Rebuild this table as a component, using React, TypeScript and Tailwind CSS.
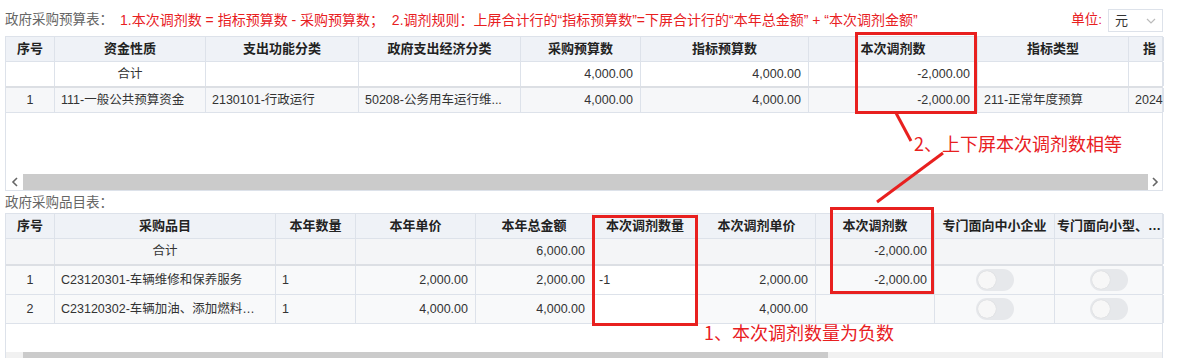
import React from 'react';

const border = 'border-[#dde2ea]';

type Cell = { text?: React.ReactNode; align?: 'l' | 'c' | 'r'; bg?: string };

function Row({ cols, cells, h, head, extra }: { cols: string; cells: Cell[]; h: string; head?: boolean; extra?: string }) {
  return (
    <div className={`grid ${cols} ${h} ${extra || ''}`}>
      {cells.map((c, i) => (
        <div
          key={i}
          className={`flex items-center overflow-hidden whitespace-nowrap border-r ${border} ${
            c.align === 'r' ? 'justify-end pr-[7px]' : c.align === 'l' ? 'justify-start pl-[6px]' : 'justify-center'
          } ${head ? 'font-bold text-[13px] text-[#222]' : 'text-[12.5px] text-[#333]'} ${c.bg || ''}`}
        >
          {c.text}
        </div>
      ))}
    </div>
  );
}

function Toggle() {
  return (
    <div className="w-[38px] h-[22px] rounded-full bg-[#e6e8eb] flex items-center">
      <div className="w-[18px] h-[18px] rounded-full bg-[#f7f7f7] ml-[2px] shadow-[0_0_1px_rgba(0,0,0,0.15)]" />
    </div>
  );
}

function Chevron({ dir }: { dir: 'l' | 'r' }) {
  return (
    <svg width="8" height="10" viewBox="0 0 8 10" className="text-[#666]">
      <path d={dir === 'l' ? 'M6 1 L2 5 L6 9' : 'M2 1 L6 5 L2 9'} fill="none" stroke="currentColor" strokeWidth="1.6" />
    </svg>
  );
}

const topCols = 'grid-cols-[49px_151px_153px_162px_120px_168px_169px_151px_35px]';
const botCols = 'grid-cols-[49px_221px_80px_120px_117px_105px_118px_119px_120px_109px]';

export default function App() {
  return (
    <div className="relative w-[1178px] h-[358px] overflow-hidden bg-white pl-[5px] font-['Liberation_Sans','Noto_Sans_CJK_SC',sans-serif] text-[12px]">
      {/* caption */}
      <div className="h-[36px] w-[1158px] flex items-center justify-between pt-[5px]">
        <div className="flex items-center">
          <span className="text-[13.5px] text-[#666]">政府采购预算表：</span>
          <span className="text-[14px] text-[#e8201f] ml-[7px]">
            1.本次调剂数 = 指标预算数 - 采购预算数；&nbsp; 2.调剂规则：上屏合计行的“指标预算数”=下屏合计行的“本年总金额” + “本次调剂金额”
          </span>
        </div>
        <div className="flex items-center">
          <span className="text-[13.5px] text-[#e8201f] mr-[6px]">单位:</span>
          <div className={`w-[55px] h-[23px] border ${border} flex items-center justify-between pl-[6px] pr-[6px] text-[13px] text-[#333]`}>
            <span>元</span>
            <svg width="10" height="6" viewBox="0 0 10 6">
              <path d="M1 1 L5 5 L9 1" fill="none" stroke="#bbb" strokeWidth="1.2" />
            </svg>
          </div>
        </div>
      </div>

      {/* top table */}
      <div className={`w-[1158px] h-[155px] border ${border} flex flex-col`}>
        <Row
          cols={topCols}
          h="h-[25px]"
          head
          extra={`bg-[#eff2f7] border-b ${border}`}
          cells={[
            { text: '序号' },
            { text: '资金性质' },
            { text: '支出功能分类' },
            { text: '政府支出经济分类' },
            { text: '采购预算数' },
            { text: '指标预算数' },
            { text: '本次调剂数' },
            { text: '指标类型' },
            { text: '指', align: 'r' },
          ]}
        />
        <Row
          cols={topCols}
          h="h-[26px]"
          extra="bg-white border-b-2 border-[#dcdfe4]"
          cells={[
            {},
            { text: '合计' },
            {},
            {},
            { text: '4,000.00', align: 'r' },
            { text: '4,000.00', align: 'r' },
            { text: '-2,000.00', align: 'r' },
            {},
            {},
          ]}
        />
        <Row
          cols={topCols}
          h="h-[25px]"
          extra={`bg-[#f6f7f9] border-b ${border}`}
          cells={[
            { text: '1' },
            { text: '111-一般公共预算资金', align: 'l' },
            { text: '2130101-行政运行', align: 'l' },
            { text: '50208-公务用车运行维...', align: 'l' },
            { text: '4,000.00', align: 'r' },
            { text: '4,000.00', align: 'r' },
            { text: '-2,000.00', align: 'r' },
            { text: '211-正常年度预算', align: 'l' },
            { text: '2024', align: 'l' },
          ]}
        />
        <div className="flex-1" />
        <div className="h-[16px] flex items-center bg-white">
          <div className="w-[17px] flex justify-center">
            <Chevron dir="l" />
          </div>
          <div className="w-[1125px] h-[16px] bg-[#cbcbcb]" />
          <div className="flex-1 flex justify-center">
            <Chevron dir="r" />
          </div>
        </div>
      </div>

      {/* bottom caption */}
      <div className="h-[22px] flex items-center pt-[2px] text-[13.5px] text-[#666]">政府采购品目表：</div>

      {/* bottom table */}
      <div className={`w-[1158px] h-[160px] border ${border} flex flex-col`}>
        <Row
          cols={botCols}
          h="h-[25px]"
          head
          extra={`bg-[#eff2f7] border-b ${border}`}
          cells={[
            { text: '序号' },
            { text: '采购品目' },
            { text: '本年数量' },
            { text: '本年单价' },
            { text: '本年总金额' },
            { text: '本次调剂数量' },
            { text: '本次调剂单价' },
            { text: '本次调剂数' },
            { text: '专门面向中小企业' },
            { text: '专门面向小型、…' },
          ]}
        />
        <Row
          cols={botCols}
          h="h-[27px]"
          extra="bg-[#f4f5f7] border-b-2 border-[#dcdfe4]"
          cells={[
            {},
            { text: '合计' },
            {},
            {},
            { text: '6,000.00', align: 'r' },
            {},
            {},
            { text: '-2,000.00', align: 'r' },
            {},
            {},
          ]}
        />
        <Row
          cols={botCols}
          h="h-[29px]"
          extra={`bg-[#f8f9fa] border-b ${border}`}
          cells={[
            { text: '1' },
            { text: 'C23120301-车辆维修和保养服务', align: 'l' },
            { text: '1', align: 'l' },
            { text: '2,000.00', align: 'r' },
            { text: '2,000.00', align: 'r' },
            { text: '-1', align: 'l', bg: 'bg-white' },
            { text: '2,000.00', align: 'r' },
            { text: '-2,000.00', align: 'r' },
            { text: <Toggle /> },
            { text: <Toggle /> },
          ]}
        />
        <Row
          cols={botCols}
          h="h-[29px]"
          extra={`bg-[#f8f9fa] border-b ${border}`}
          cells={[
            { text: '2' },
            { text: 'C23120302-车辆加油、添加燃料…', align: 'l' },
            { text: '1', align: 'l' },
            { text: '4,000.00', align: 'r' },
            { text: '4,000.00', align: 'r' },
            { text: '', bg: 'bg-white' },
            { text: '4,000.00', align: 'r' },
            {},
            { text: <Toggle /> },
            { text: <Toggle /> },
          ]}
        />
        <div className="h-[28px] bg-white" />
        <div className="h-[16px] flex bg-[#f1f1f1]">
          <div className="w-[17px]" />
          <div className="w-[805px] h-[16px] bg-[#cbcbcb]" />
        </div>
      </div>

      {/* annotations */}
      <div className="absolute left-[855px] top-[32px] w-[122px] h-[82px] border-[3px] border-[#e8201f]" />
      <div className="absolute left-[592px] top-[215px] w-[106px] h-[111px] border-[3px] border-[#e8201f]" />
      <div className="absolute left-[830px] top-[207px] w-[104px] h-[87px] border-[3px] border-[#e8201f]" />
      <svg className="absolute left-0 top-0" width="1178" height="358">
        <line x1="896" y1="113" x2="911" y2="141" stroke="#e8201f" strokeWidth="3" />
        <line x1="943" y1="153" x2="877" y2="202" stroke="#e8201f" strokeWidth="3" />
      </svg>
      <div className="absolute left-[914px] top-[130px] text-[18px] leading-[26px] text-[#e8201f] font-['Noto_Sans_CJK_SC',sans-serif]">
        2、上下屏本次调剂数相等
      </div>
      <div className="absolute left-[704px] top-[319px] text-[18px] leading-[26px] text-[#e8201f] font-['Noto_Sans_CJK_SC',sans-serif]">
        1、本次调剂数量为负数
      </div>
    </div>
  );
}
